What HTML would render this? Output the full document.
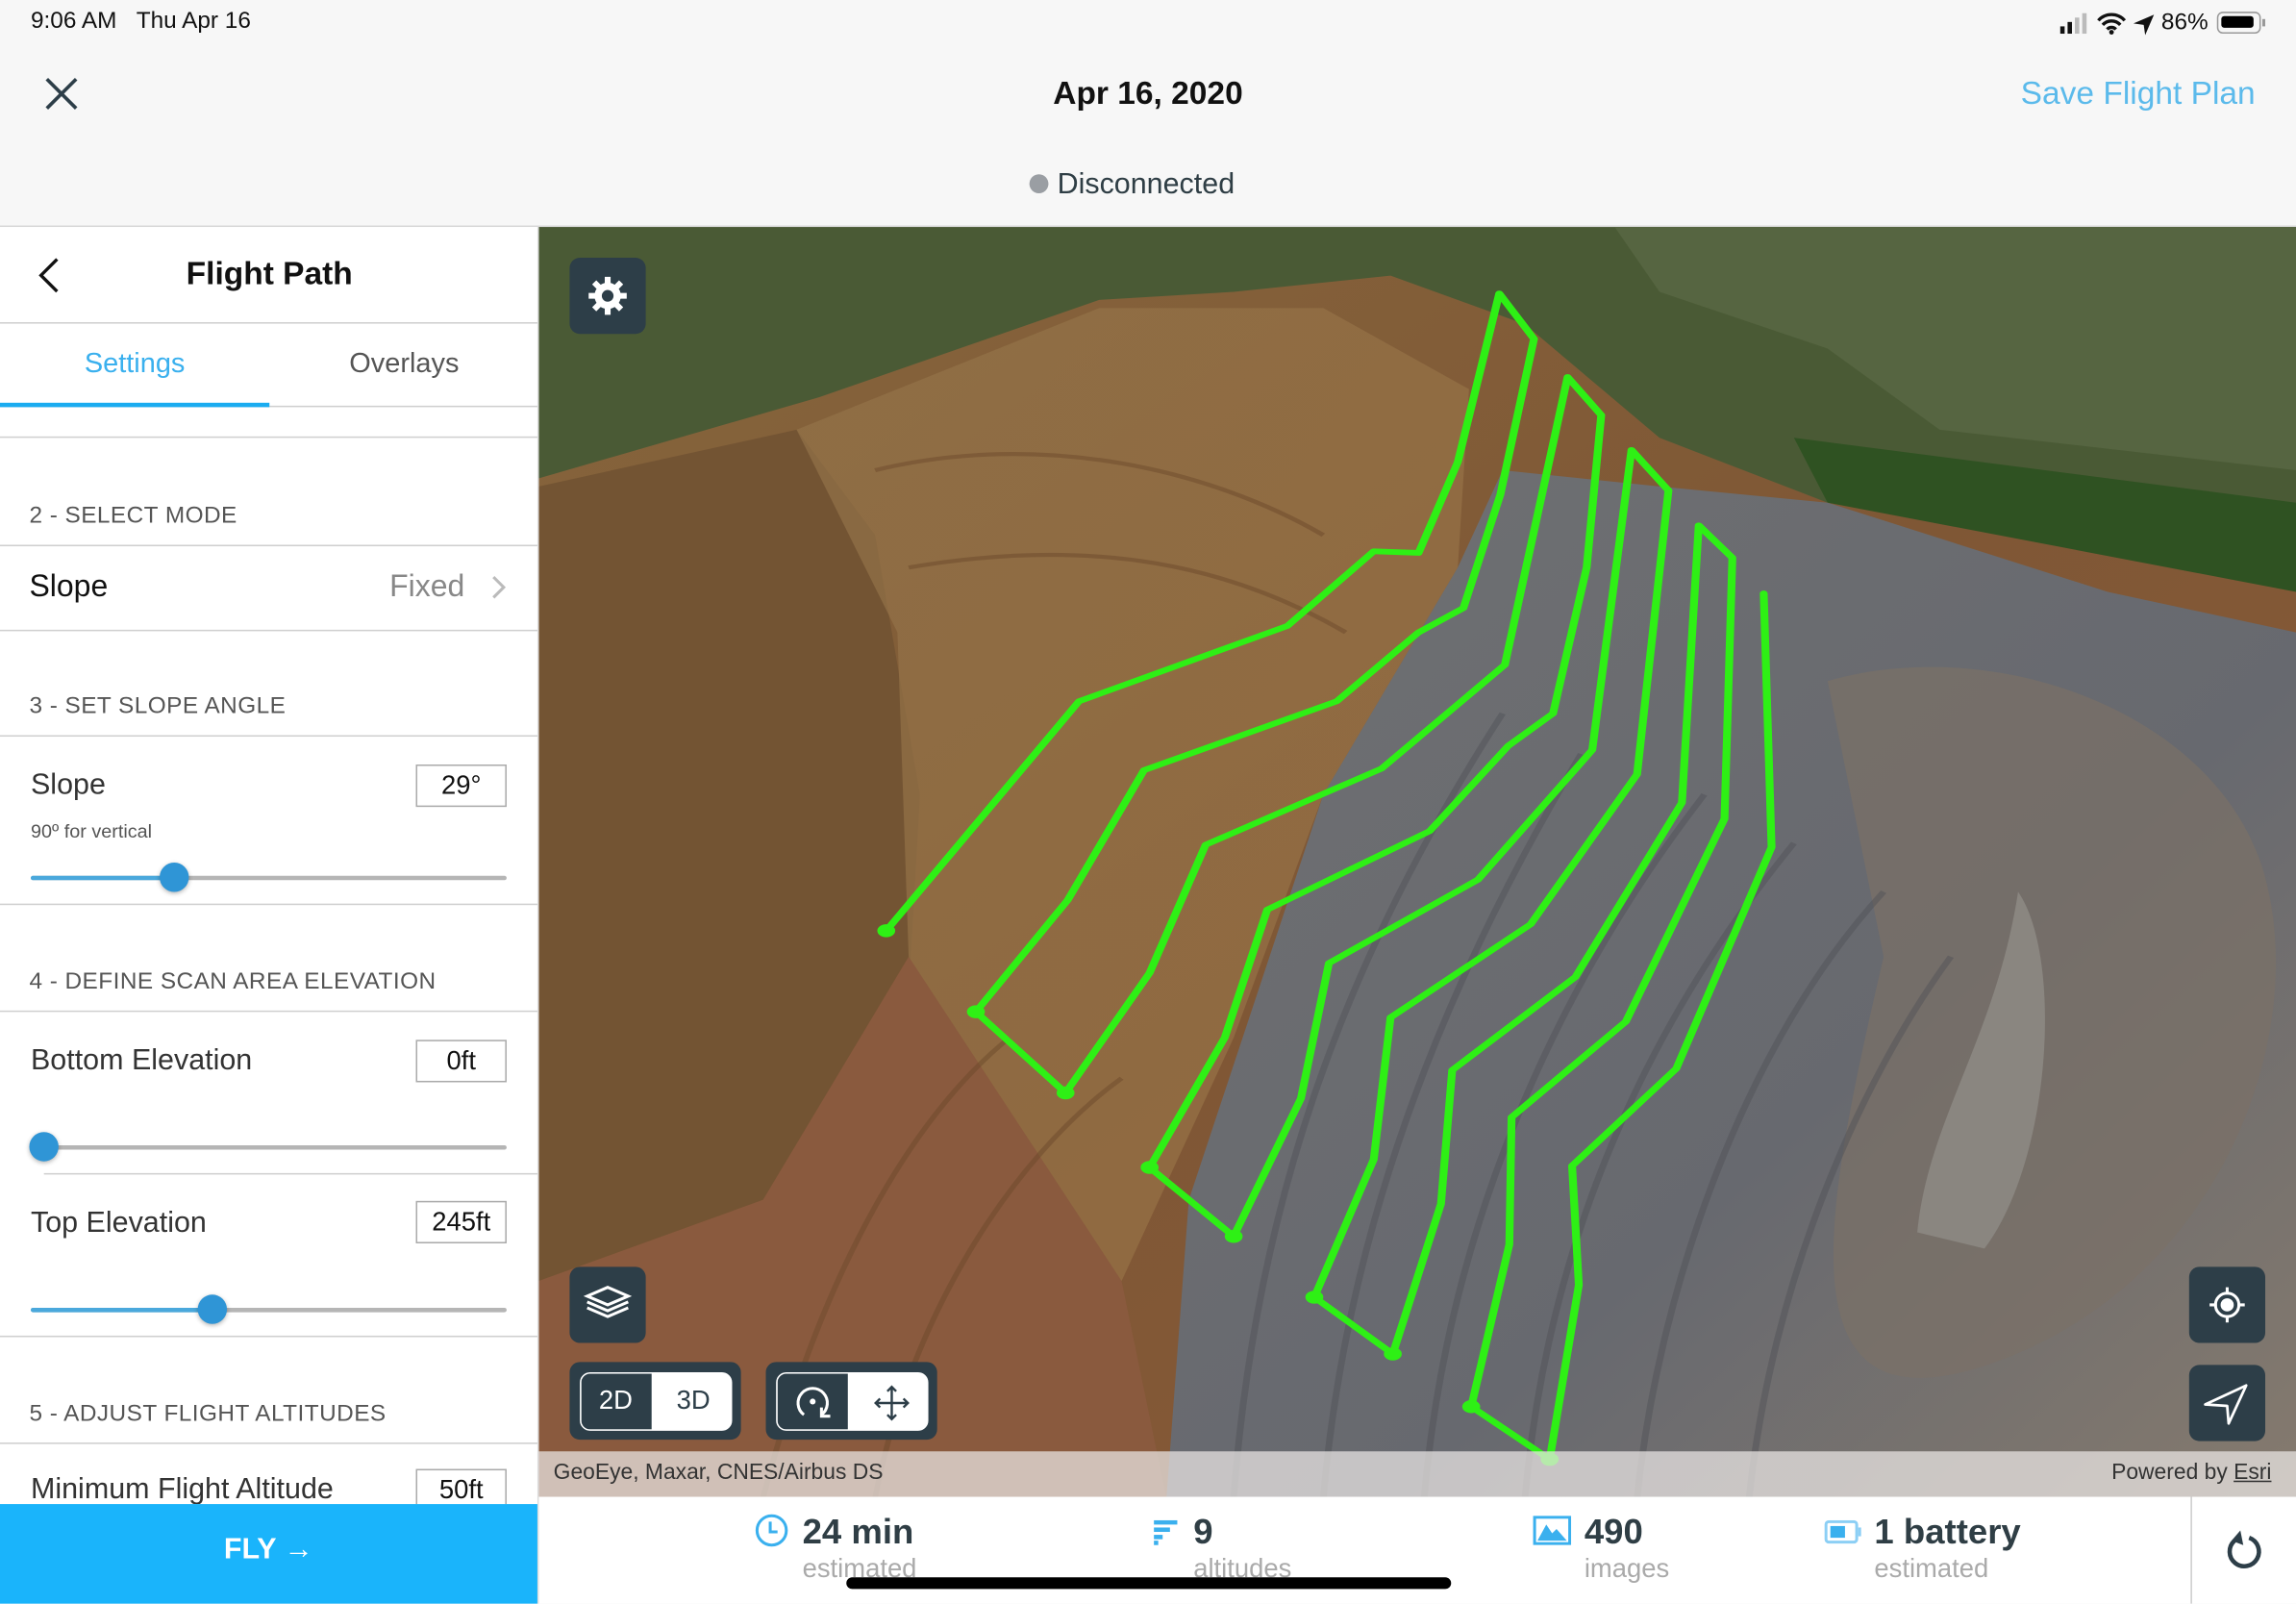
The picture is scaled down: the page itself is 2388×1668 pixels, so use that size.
<!DOCTYPE html>
<html><head><meta charset="utf-8"><style>
*{margin:0;padding:0;box-sizing:border-box}
html,body{width:2388px;height:1668px;overflow:hidden;background:#f7f7f7}
#s{position:absolute;left:0;top:0;width:1568px;height:1095px;transform:scale(1.52296);transform-origin:0 0;font-family:"Liberation Sans",sans-serif;background:#f7f7f7}
.a{position:absolute;white-space:nowrap}
.t{line-height:1.2}
.ln{position:absolute;height:1px;background:#cfcfcf}
.sec{font-size:16px;color:#555;letter-spacing:.3px}
.lab{font-size:20px;color:#333}
.box{position:absolute;border:1.5px solid #aaa;background:#fff;font-size:18px;color:#111;text-align:center;line-height:26px}
.trk{position:absolute;height:3px;background:#b5b5b5;border-radius:2px}
.fil{position:absolute;height:3px;background:#4aa8dc;border-radius:2px}
.knob{position:absolute;width:20px;height:20px;border-radius:50%;background:#2f95d6;box-shadow:0 1px 3px rgba(0,0,0,.3)}
.btn{position:absolute;background:#2d3e48;border-radius:7px}
</style></head><body><div id="s">
<div class="a t" style="left:21px;top:5px;font-size:16px;color:#111">9:06 AM&nbsp;&nbsp;&nbsp;Thu Apr 16</div>
<svg class="a" style="left:1405px;top:6px" width="150" height="20" viewBox="0 0 150 20">
<rect x="2" y="12" width="3" height="5" fill="#111"/><rect x="7" y="9" width="3" height="8" fill="#111"/><rect x="12" y="6" width="3" height="11" fill="#bbb"/><rect x="17" y="3" width="3" height="14" fill="#bbb"/>
<path d="M28 8a12 12 0 0 1 18 0M31 11a8 8 0 0 1 12 0M34 14a4 4 0 0 1 6 0" stroke="#111" stroke-width="2.2" fill="none"/><circle cx="37" cy="16" r="1.6" fill="#111"/>
<path d="M52 10l14-6-6 14-1-7z" fill="#111"/>
</svg>
<div class="a t" style="left:1476px;top:6px;font-size:16px;color:#111">86%</div>
<div class="a" style="left:1514px;top:8px;width:30px;height:15px;border:1.5px solid #999;border-radius:4px"><div style="position:absolute;left:2px;top:2px;width:22px;height:8px;background:#000;border-radius:2px"></div></div>
<div class="a" style="left:1545px;top:13px;width:2px;height:5px;background:#999"></div>
<svg class="a" style="left:30px;top:52px" width="24" height="24"><path d="M2 2L22 22M22 2L2 22" stroke="#2d3e48" stroke-width="2.4"/></svg>
<div class="a t" style="left:0;width:1568px;text-align:center;top:51px;font-size:22px;color:#111;font-weight:bold">Apr 16, 2020</div>
<div class="a t" style="left:1380px;top:51px;font-size:22px;color:#5bbaeb">Save Flight Plan</div>
<div class="a" style="left:703px;top:119px;width:13px;height:13px;border-radius:50%;background:#9a9ea3"></div>
<div class="a t" style="left:722px;top:114px;font-size:20px;color:#2f3e45">Disconnected</div>
<div class="ln" style="left:0;top:154px;width:1568px;background:#d8d8d8"></div>
<svg class="a" style="left:368px;top:155px" width="1200" height="868" viewBox="374 157.6 1193.7 853.6" preserveAspectRatio="none">
<g transform="translate(374 157.6) scale(0.7613 0.5444)">
<defs>
<linearGradient id="br" x1="0" y1="0" x2="1" y2="1"><stop offset="0" stop-color="#86653c"/><stop offset=".5" stop-color="#7f5735"/><stop offset="1" stop-color="#8c5a3a"/></linearGradient>
<linearGradient id="gr" x1="0" y1="0" x2="1" y2="1"><stop offset="0" stop-color="#6f7072"/><stop offset=".6" stop-color="#67696f"/><stop offset="1" stop-color="#857a6e"/></linearGradient>
<linearGradient id="yl" x1="0" y1="0" x2="1" y2="1"><stop offset="0" stop-color="#94744a"/><stop offset="1" stop-color="#9a7446"/></linearGradient>
</defs>
<rect x="0" y="0" width="1568" height="1568" fill="#4a5a35"/>
<path d="M0 0H960L1000 80 1150 150 1250 250 1568 300V0z" fill="#566541"/>
<path d="M1120 260L1568 340V450L1400 420 1150 340z" fill="#2f5222"/>
<path d="M0 310L250 210 500 90 620 80 760 60 880 120 1000 260 1150 340 1568 450V1568H0z" fill="url(#br)"/>
<path d="M0 320L230 250 300 380 340 700 330 950 200 1200 0 1300z" fill="#735433"/>
<path d="M230 250L500 100 700 100 830 200 820 420 700 700 620 1000 520 1300 400 1200 330 900 320 500z" fill="url(#yl)" opacity=".65"/>
<path d="M330 900L520 1300 560 1568H0V1300L200 1200z" fill="#8a5a3e"/>
<path d="M560 1568L580 1200 640 950 700 700 820 420 860 300 1000 320 1150 340 1400 450 1568 500V1568z" fill="url(#gr)"/>
<path d="M1150 560C1300 500 1500 600 1540 800S1500 1300 1300 1400 1150 1200 1200 900z" fill="#7a7067" opacity=".7"/>
<path d="M1230 1240C1240 1100 1300 1000 1320 820 1360 900 1350 1150 1290 1260z" fill="#8a8680"/>
<g stroke="#4f5056" stroke-width="6" fill="none" opacity=".45">
<path d="M620 1568C640 1200 720 900 860 600"/><path d="M700 1568C720 1250 800 950 930 650"/><path d="M790 1568C810 1250 900 950 1040 700"/><path d="M880 1568C900 1250 990 980 1120 760"/><path d="M980 1568C1000 1300 1080 1000 1200 820"/><path d="M1080 1568C1100 1300 1180 1050 1260 900"/>
</g>
<g stroke="#6d4a2c" stroke-width="5" fill="none" opacity=".5">
<path d="M300 300C450 250 600 300 700 380"/><path d="M330 420C500 380 620 420 720 500"/><path d="M200 1568C250 1300 330 1100 420 1000"/><path d="M300 1568C330 1350 420 1150 520 1050"/>
</g>
<g fill="none" stroke="#2ef015" stroke-width="7" stroke-linejoin="round" stroke-linecap="round">
<polyline points="310,868 400,720 482,585 668,492 745,400 785,402 820,290 857,82 888,138 858,330 825,470 785,500 712,585 540,670 472,830 390,968 470,1068 545,920 595,762 752,668 862,540 918,185 948,232 935,420 905,600 865,640 795,745 650,842 612,1000 545,1160 620,1245 680,1075 705,908 838,805 940,645 975,275 1008,325 980,675 885,860 760,975 745,1150 692,1320 762,1390 805,1205 815,1040 925,925 1020,710 1035,368 1065,408 1058,730 970,980 868,1098 866,1255 832,1455 902,1520 928,1305 922,1158 1015,1038 1100,765 1093,452"/>
</g>
<g fill="#2ef015"><circle cx="310" cy="868" r="8"/><circle cx="390" cy="968" r="8"/><circle cx="470" cy="1068" r="8"/><circle cx="545" cy="1160" r="8"/><circle cx="620" cy="1245" r="8"/><circle cx="692" cy="1320" r="8"/><circle cx="762" cy="1390" r="8"/><circle cx="832" cy="1455" r="8"/><circle cx="902" cy="1520" r="8"/></g>
</g>
</svg>
<div class="btn" style="left:389px;top:176px;width:52px;height:52px"></div>
<svg class="a" style="left:399px;top:186px" width="32" height="32" viewBox="0 0 32 32"><g fill="#fff"><circle cx="16" cy="16" r="9"/><g stroke="#fff" stroke-width="4"><path d="M16 3v26M3 16h26M6.8 6.8l18.4 18.4M25.2 6.8L6.8 25.2"/></g></g><circle cx="16" cy="16" r="4" fill="#2d3e48"/></svg>
<div class="btn" style="left:389px;top:865px;width:52px;height:52px"></div>
<svg class="a" style="left:397px;top:875px" width="36" height="32" viewBox="0 0 36 32"><g fill="none" stroke="#fff" stroke-width="2"><path d="M18 4L32 10 18 16 4 10z"/><path d="M4 14L18 20 32 14"/><path d="M4 18L18 24 32 18"/></g></svg>
<div class="btn" style="left:389px;top:930px;width:117px;height:53px"></div>
<div class="a" style="left:396px;top:937px;width:104px;height:40px;border:1.5px solid #fff;border-radius:7px;background:#fff;overflow:hidden"><div style="position:absolute;left:0;top:0;width:48px;height:100%;background:#2d3e48"></div></div>
<div class="a t" style="left:409px;top:946px;font-size:18px;color:#fff">2D</div>
<div class="a t" style="left:462px;top:946px;font-size:18px;color:#2d3e48">3D</div>
<div class="btn" style="left:523px;top:930px;width:117px;height:53px"></div>
<div class="a" style="left:530px;top:937px;width:104px;height:40px;border:1.5px solid #fff;border-radius:7px;background:#fff;overflow:hidden"><div style="position:absolute;left:0;top:0;width:48px;height:100%;background:#2d3e48"></div></div>
<svg class="a" style="left:540px;top:943px" width="30" height="30" viewBox="0 0 30 30"><path d="M9 23A10 10 0 1 1 21 23" fill="none" stroke="#fff" stroke-width="2"/><path d="M21 18v6h6" fill="none" stroke="#fff" stroke-width="2"/><circle cx="15" cy="14" r="2" fill="#fff"/></svg>
<svg class="a" style="left:596px;top:945px" width="26" height="26" viewBox="0 0 26 26"><g fill="none" stroke="#2d3e48" stroke-width="1.6"><path d="M13 2v22M2 13h22M10 5l3-3 3 3M10 21l3 3 3-3M5 10l-3 3 3 3M21 10l3 3-3 3"/></g></svg>
<div class="btn" style="left:1495px;top:865px;width:52px;height:52px"></div>
<svg class="a" style="left:1505px;top:875px" width="32" height="32" viewBox="0 0 32 32"><circle cx="16" cy="16" r="8" fill="none" stroke="#fff" stroke-width="2"/><circle cx="16" cy="16" r="4.5" fill="#fff"/><path d="M16 4v5M16 23v5M4 16h5M23 16h5" stroke="#fff" stroke-width="2"/></svg>
<div class="btn" style="left:1495px;top:932px;width:52px;height:52px"></div>
<svg class="a" style="left:1503px;top:940px" width="36" height="36" viewBox="0 0 36 36"><path d="M3 19L31 6 19 32 18 20z" fill="none" stroke="#fff" stroke-width="1.8" stroke-linejoin="round"/></svg>
<div class="a" style="left:368px;top:991px;width:1200px;height:31px;background:rgba(235,232,230,.72)"></div>
<div class="a t" style="left:378px;top:997px;font-size:15px;color:#333">GeoEye, Maxar, CNES/Airbus DS</div>
<div class="a t" style="left:1442px;top:997px;font-size:15px;color:#333">Powered by <span style="text-decoration:underline">Esri</span></div>
<div class="a" style="left:368px;top:1022px;width:1200px;height:73px;background:#fff"></div>
<div class="a" style="left:1496px;top:1022px;width:1px;height:73px;background:#ccc"></div>
<svg class="a" style="left:515px;top:1033px" width="24" height="24" viewBox="0 0 24 24"><circle cx="12" cy="12" r="10" fill="none" stroke="#3ab0ee" stroke-width="2"/><path d="M11 6v7h5" fill="none" stroke="#3ab0ee" stroke-width="2"/></svg>
<div class="a t" style="left:548px;top:1033px;font-size:24px;color:#2f3e45;font-weight:bold">24 min</div>
<div class="a t" style="left:548px;top:1061px;font-size:18px;color:#aaa">estimated</div>
<svg class="a" style="left:788px;top:1038px" width="18" height="18" viewBox="0 0 18 18"><g fill="#3ab0ee"><rect x="0" y="0" width="16" height="3"/><rect x="0" y="5" width="11" height="3"/><rect x="0" y="10" width="6" height="3"/><rect x="0" y="14" width="3" height="3"/></g></svg>
<div class="a t" style="left:815px;top:1033px;font-size:24px;color:#2f3e45;font-weight:bold">9</div>
<div class="a t" style="left:815px;top:1061px;font-size:18px;color:#aaa">altitudes</div>
<svg class="a" style="left:1047px;top:1035px" width="26" height="20" viewBox="0 0 26 20"><rect x="1" y="1" width="24" height="18" fill="none" stroke="#3ab0ee" stroke-width="2"/><path d="M3 17L9 6 13 12 16 9 23 17z" fill="#3ab0ee"/></svg>
<div class="a t" style="left:1082px;top:1033px;font-size:24px;color:#2f3e45;font-weight:bold">490</div>
<div class="a t" style="left:1082px;top:1061px;font-size:18px;color:#aaa">images</div>
<svg class="a" style="left:1246px;top:1038px" width="26" height="16" viewBox="0 0 26 16"><rect x="1" y="1" width="21" height="14" rx="2" fill="none" stroke="#8ccff5" stroke-width="2"/><rect x="4" y="4" width="10" height="8" fill="#3ab0ee"/><rect x="23" y="5" width="2" height="6" fill="#8ccff5"/></svg>
<div class="a t" style="left:1280px;top:1033px;font-size:24px;color:#2f3e45;font-weight:bold">1 battery</div>
<div class="a t" style="left:1280px;top:1061px;font-size:18px;color:#aaa">estimated</div>
<svg class="a" style="left:1516px;top:1043px" width="32" height="32" viewBox="0 0 32 32"><path d="M10 9A10 10 0 1 0 20 7" fill="none" stroke="#2d3e48" stroke-width="3"/><path d="M14 2L8 9 16 12z" fill="#2d3e48"/></svg>
<div class="a" style="left:578px;top:1077px;width:413px;height:8px;border-radius:4px;background:#000"></div>
<div class="a" style="left:0;top:155px;width:368px;height:872px;background:#fff;overflow:hidden">
<svg class="a" style="left:24px;top:20px" width="18" height="26" viewBox="0 0 18 26"><path d="M15 2L4 13 15 24" fill="none" stroke="#111" stroke-width="2.2"/></svg>
<div class="a t" style="left:0;width:368px;text-align:center;top:19px;font-size:22px;color:#111;font-weight:bold">Flight Path</div>
<div class="ln" style="left:0;top:65px;width:368px"></div>
<div class="a t" style="left:0;width:184px;text-align:center;top:83px;font-size:19px;color:#3ab0ee">Settings</div>
<div class="a t" style="left:184px;width:184px;text-align:center;top:83px;font-size:19px;color:#555">Overlays</div>
<div class="ln" style="left:0;top:122px;width:368px"></div>
<div class="a" style="left:0;top:120px;width:184px;height:3px;background:#1aacf0"></div>
<div class="ln" style="left:0;top:143px;width:368px"></div>
<div class="a t sec" style="left:20px;top:188px">2 - SELECT MODE</div>
<div class="ln" style="left:0;top:217px;width:368px"></div>
<div class="a t" style="left:20px;top:233px;font-size:21px;color:#111">Slope</div>
<div class="a t" style="left:266px;top:233px;font-size:21px;color:#888">Fixed</div>
<svg class="a" style="left:334px;top:237px" width="12" height="18"><path d="M3 2l7 7-7 7" fill="none" stroke="#bbb" stroke-width="2"/></svg>
<div class="ln" style="left:0;top:275px;width:368px"></div>
<div class="a t sec" style="left:20px;top:318px">3 - SET SLOPE ANGLE</div>
<div class="ln" style="left:0;top:347px;width:368px"></div>
<div class="a t lab" style="left:21px;top:369px">Slope</div>
<div class="box" style="left:284px;top:367px;width:62px;height:29px">29°</div>
<div class="a t" style="left:21px;top:405px;font-size:13px;color:#555">90º for vertical</div>
<div class="trk" style="left:21px;top:443px;width:325px"></div><div class="fil" style="left:21px;top:443px;width:98px"></div><div class="knob" style="left:109px;top:434px"></div>
<div class="ln" style="left:0;top:462px;width:368px"></div>
<div class="a t sec" style="left:20px;top:506px">4 - DEFINE SCAN AREA ELEVATION</div>
<div class="ln" style="left:0;top:535px;width:368px"></div>
<div class="a t lab" style="left:21px;top:557px">Bottom Elevation</div>
<div class="box" style="left:284px;top:555px;width:62px;height:29px">0ft</div>
<div class="trk" style="left:21px;top:627px;width:325px"></div><div class="knob" style="left:20px;top:618px"></div>
<div class="ln" style="left:30px;top:646px;width:338px"></div>
<div class="a t lab" style="left:21px;top:668px">Top Elevation</div>
<div class="box" style="left:284px;top:665px;width:62px;height:29px">245ft</div>
<div class="trk" style="left:21px;top:738px;width:325px"></div><div class="fil" style="left:21px;top:738px;width:124px"></div><div class="knob" style="left:135px;top:729px"></div>
<div class="ln" style="left:0;top:757px;width:368px"></div>
<div class="a t sec" style="left:20px;top:801px">5 - ADJUST FLIGHT ALTITUDES</div>
<div class="ln" style="left:0;top:830px;width:368px"></div>
<div class="a t lab" style="left:21px;top:850px">Minimum Flight Altitude</div>
<div class="box" style="left:284px;top:848px;width:62px;height:29px">50ft</div>
</div>
<div class="a" style="left:367px;top:155px;width:1px;height:940px;background:#ddd"></div>
<div class="a" style="left:0;top:1027px;width:367px;height:68px;background:#1ab4fb"></div>
<div class="a t" style="left:0;width:367px;text-align:center;top:1046px;font-size:20px;font-weight:bold;color:#fff">FLY →</div>
</div></body></html>
